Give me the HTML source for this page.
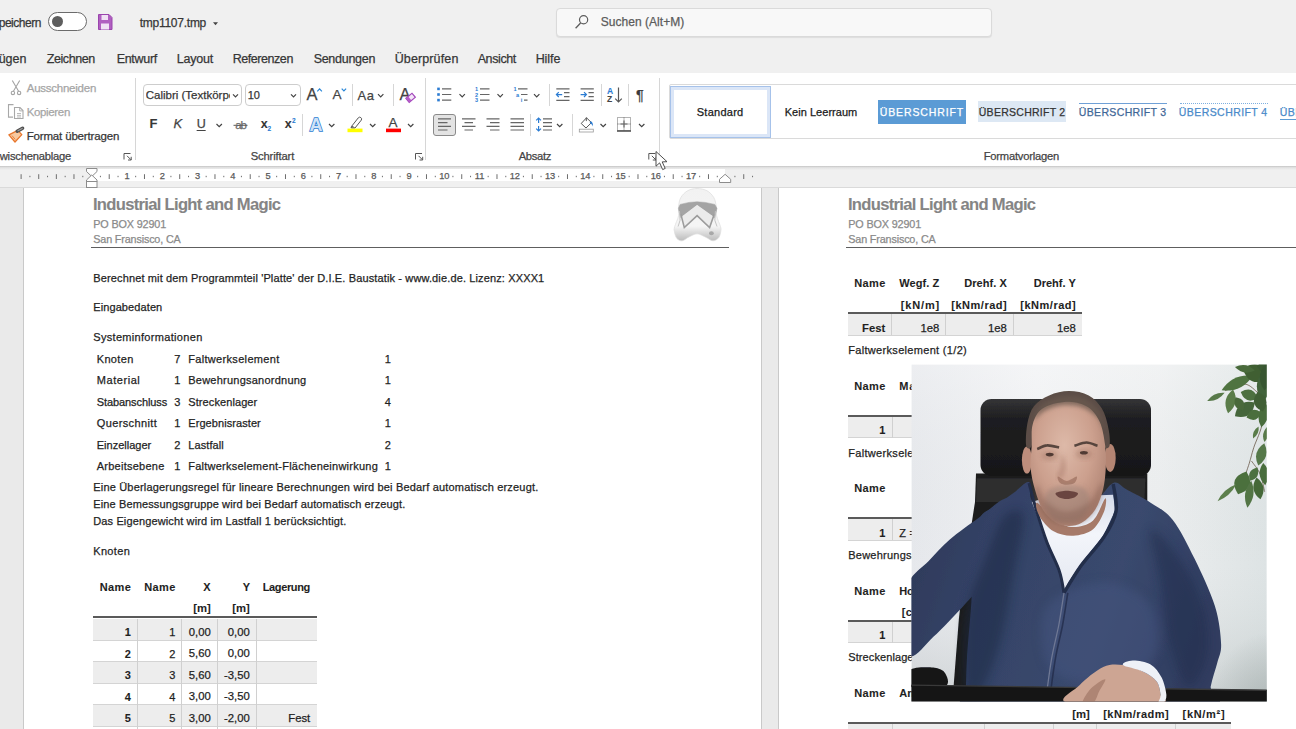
<!DOCTYPE html>
<html lang="de"><head><meta charset="utf-8"><title>tmp1107.tmp - Word</title>
<style>
html,body{margin:0;padding:0;}
body{width:1296px;height:729px;overflow:hidden;position:relative;background:#eaeaea;
  font-family:"Liberation Sans",sans-serif;color:#262626;}
.t{position:absolute;white-space:nowrap;line-height:20px;color:#262626;-webkit-text-stroke:0.25px currentColor;}
.b{position:absolute;}
svg{position:absolute;overflow:visible;}
#titlebar{left:0;top:0;width:1296px;height:73px;background:#f0f0f0;}
#ribbon{left:0;top:73px;width:1296px;height:93px;background:#ffffff;}
#rulerbg{left:0;top:166px;width:1296px;height:22px;background:#f0f0f0;border-bottom:1px solid #dadada;box-sizing:border-box;}
#ribshadow{left:0;top:166px;width:1296px;height:4px;background:linear-gradient(#c4c4c4,#e2e2e2 40%,#f0f0f0);}
#search{left:555.5px;top:7.5px;width:436px;height:29px;box-sizing:border-box;background:#f8f8f8;border:1px solid #dadada;border-radius:4px;box-shadow:0 1px 1px rgba(0,0,0,.08);}
.vsep{position:absolute;width:1px;background:#d6d6d6;}
.combo{position:absolute;box-sizing:border-box;border:1px solid #cdcdcd;border-radius:4px;background:#fff;}
#rulerwhite{left:93px;top:169px;width:632px;height:12px;background:#ffffff;}
.page{position:absolute;background:#fff;top:188px;height:560px;}
.hl{position:absolute;height:1.2px;background:#5e5e5e;}
.thick{position:absolute;height:2px;background:#5a5a5a;}
.shade{position:absolute;background:#ededed;}
.rl{position:absolute;height:1px;background:#d4d4d4;}
.cl{position:absolute;width:1px;background:#d0d0d0;}
#gallery{left:669px;top:84px;width:640px;height:55px;box-sizing:border-box;border:1px solid #dadada;border-radius:2px;background:#fff;}
#stdsel{left:670px;top:86px;width:101px;height:52px;box-sizing:border-box;border:1px solid #a6c2ea;box-shadow:inset 0 0 0 3px #dbe6f7;background:#fff;}

</style></head>
<body>
<div class="b" id="titlebar"></div>
<div class="b" id="ribbon"></div>
<div class="b" id="rulerbg"></div>
<div class="b" id="ribshadow"></div>
<div class="b" id="search"></div>
<!-- toggle -->
<div class="b" style="left:48px;top:12px;width:39px;height:19px;box-sizing:border-box;border:1px solid #6b6b6b;border-radius:10px;background:#fff;"></div>
<div class="b" style="left:52px;top:16px;width:11px;height:11px;border-radius:50%;background:#5e5e5e;"></div>
<!-- ICONS-TOP -->
<!-- ribbon separators -->
<div class="vsep" style="left:135px;top:78px;height:82px;"></div>
<div class="vsep" style="left:425px;top:78px;height:82px;"></div>
<div class="vsep" style="left:659px;top:78px;height:82px;"></div>
<div class="vsep" style="left:302px;top:114px;height:22px;"></div>
<div class="vsep" style="left:352px;top:84px;height:22px;"></div>
<div class="vsep" style="left:393px;top:84px;height:22px;"></div>
<div class="vsep" style="left:549px;top:84px;height:22px;"></div>
<div class="vsep" style="left:601px;top:84px;height:22px;"></div>
<div class="vsep" style="left:628px;top:84px;height:22px;"></div>
<div class="vsep" style="left:530px;top:114px;height:22px;"></div>
<div class="vsep" style="left:572px;top:114px;height:22px;"></div>
<div class="combo" style="left:143px;top:84px;width:99px;height:22px;"></div>
<div class="combo" style="left:245px;top:84px;width:56px;height:22px;"></div>
<div class="b" style="left:433px;top:114px;width:23px;height:22px;box-sizing:border-box;border:1px solid #8a8a8a;border-radius:3px;background:#e3e3e3;"></div>
<div class="b" id="gallery"></div>
<div class="b" id="stdsel"></div>
<div class="b" style="left:878px;top:99.5px;width:87.5px;height:24.5px;background:#5b9bd5;"></div>
<div class="b" style="left:978px;top:100.5px;width:88px;height:21.5px;background:#dde8f4;"></div>
<div class="b" style="left:1079px;top:103px;width:88px;height:1px;background:#6fa0d6;"></div>
<div class="b" style="left:1180px;top:103px;width:88px;height:0;border-top:1px dotted #7fb0e0;"></div>
<div class="b" style="left:1280px;top:119px;width:20px;height:1px;background:#5b9bd5;"></div>
<!-- ruler -->
<div class="b" id="rulerwhite"></div>
<svg width="1296" height="729" style="left:0;top:0" fill="#6e6e6e"><rect x="20.60" y="174.2" width="1" height="4.8"/><rect x="29.41" y="175.8" width="1" height="1.4"/><rect x="38.22" y="174.2" width="1" height="4.8"/><rect x="47.04" y="175.8" width="1" height="1.4"/><rect x="55.85" y="174.2" width="1" height="4.8"/><rect x="64.66" y="175.8" width="1" height="1.4"/><rect x="73.47" y="174.2" width="1" height="4.8"/><rect x="82.29" y="175.8" width="1" height="1.4"/><rect x="99.91" y="175.8" width="1" height="1.4"/><rect x="108.72" y="174.2" width="1" height="4.8"/><rect x="117.54" y="175.8" width="1" height="1.4"/><rect x="135.16" y="175.8" width="1" height="1.4"/><rect x="143.97" y="174.2" width="1" height="4.8"/><rect x="152.79" y="175.8" width="1" height="1.4"/><rect x="170.41" y="175.8" width="1" height="1.4"/><rect x="179.22" y="174.2" width="1" height="4.8"/><rect x="188.04" y="175.8" width="1" height="1.4"/><rect x="205.66" y="175.8" width="1" height="1.4"/><rect x="214.47" y="174.2" width="1" height="4.8"/><rect x="223.29" y="175.8" width="1" height="1.4"/><rect x="240.91" y="175.8" width="1" height="1.4"/><rect x="249.72" y="174.2" width="1" height="4.8"/><rect x="258.54" y="175.8" width="1" height="1.4"/><rect x="276.16" y="175.8" width="1" height="1.4"/><rect x="284.98" y="174.2" width="1" height="4.8"/><rect x="293.79" y="175.8" width="1" height="1.4"/><rect x="311.41" y="175.8" width="1" height="1.4"/><rect x="320.23" y="174.2" width="1" height="4.8"/><rect x="329.04" y="175.8" width="1" height="1.4"/><rect x="346.66" y="175.8" width="1" height="1.4"/><rect x="355.48" y="174.2" width="1" height="4.8"/><rect x="364.29" y="175.8" width="1" height="1.4"/><rect x="381.91" y="175.8" width="1" height="1.4"/><rect x="390.73" y="174.2" width="1" height="4.8"/><rect x="399.54" y="175.8" width="1" height="1.4"/><rect x="417.16" y="175.8" width="1" height="1.4"/><rect x="425.98" y="174.2" width="1" height="4.8"/><rect x="434.79" y="175.8" width="1" height="1.4"/><rect x="452.41" y="175.8" width="1" height="1.4"/><rect x="461.23" y="174.2" width="1" height="4.8"/><rect x="470.04" y="175.8" width="1" height="1.4"/><rect x="487.66" y="175.8" width="1" height="1.4"/><rect x="496.48" y="174.2" width="1" height="4.8"/><rect x="505.29" y="175.8" width="1" height="1.4"/><rect x="522.91" y="175.8" width="1" height="1.4"/><rect x="531.73" y="174.2" width="1" height="4.8"/><rect x="540.54" y="175.8" width="1" height="1.4"/><rect x="558.16" y="175.8" width="1" height="1.4"/><rect x="566.98" y="174.2" width="1" height="4.8"/><rect x="575.79" y="175.8" width="1" height="1.4"/><rect x="593.41" y="175.8" width="1" height="1.4"/><rect x="602.23" y="174.2" width="1" height="4.8"/><rect x="611.04" y="175.8" width="1" height="1.4"/><rect x="628.66" y="175.8" width="1" height="1.4"/><rect x="637.48" y="174.2" width="1" height="4.8"/><rect x="646.29" y="175.8" width="1" height="1.4"/><rect x="663.91" y="175.8" width="1" height="1.4"/><rect x="672.73" y="174.2" width="1" height="4.8"/><rect x="681.54" y="175.8" width="1" height="1.4"/><rect x="699.16" y="175.8" width="1" height="1.4"/><rect x="707.98" y="174.2" width="1" height="4.8"/><rect x="716.79" y="175.8" width="1" height="1.4"/><rect x="734.41" y="175.8" width="1" height="1.4"/><rect x="743.23" y="174.2" width="1" height="4.8"/><rect x="752.04" y="175.8" width="1" height="1.4"/></svg>
<svg width="1296" height="729" style="left:0;top:0" viewBox="0 0 1296 729" fill="#fff" stroke="#8c8c8c" stroke-width="1">
<path d="M86.5 168.5h10.5v3l-5.25 5l-5.25 -5z"/>
<path d="M86.5 181.5v-1.5l5.25 -5l5.25 5v1.5z"/>
<rect x="86.5" y="181.5" width="10.5" height="6"/>
<path d="M719.5 182.5v-3.2l5.6 -5l5.6 5v3.2z"/>
</svg>

<!-- pages -->
<div class="page" style="left:23px;width:739px;border-left:1px solid #c9c9c9;border-right:1px solid #c9c9c9;box-sizing:border-box;"></div>
<div class="page" style="left:778px;width:540px;border-left:1px solid #c9c9c9;box-sizing:border-box;"></div>
<div class="hl" style="left:91.3px;top:246.6px;width:637.7px;"></div>
<div class="hl" style="left:846.3px;top:246.6px;width:460px;"></div>
<svg width="1296" height="729" style="left:0;top:0" viewBox="0 0 1296 729">
<defs><filter id="hb" x="-10%" y="-10%" width="120%" height="120%"><feGaussianBlur stdDeviation="0.45"/></filter><linearGradient id="hg" x1="0" y1="0" x2="0" y2="1"><stop offset="0" stop-color="#f2f2f2"/><stop offset="0.72" stop-color="#f5f5f5"/><stop offset="1" stop-color="#bcbcbc"/></linearGradient></defs>
<g filter="url(#hb)">
<path d="M697.1 188.5 C700.3 188.5 704.3 189.3 707.1 190.8 C709.8 192.3 712.3 194.9 713.8 197.6 C715.4 200.2 715.8 203.6 716.3 206.6 C716.7 209.6 715.9 212.4 716.6 215.7 C717.3 219.0 719.7 224.0 720.5 226.5 C721.2 229.1 721.1 229.2 720.8 231.1 C720.5 232.9 720.1 235.9 718.8 237.6 C717.5 239.2 715.2 240.9 712.9 240.8 C710.7 240.7 707.9 238.1 705.2 236.9 C702.6 235.8 699.8 233.8 697.1 233.8 C694.4 233.8 691.4 235.8 689.0 236.9 C686.5 238.1 684.2 240.6 682.2 240.8 C680.1 241.1 678.1 239.9 676.7 238.3 C675.4 236.7 674.6 233.0 674.3 231.1 C674.0 229.1 674.0 229.1 674.7 226.5 C675.4 224.0 677.9 219.0 678.6 215.7 C679.2 212.4 678.2 209.6 678.6 206.6 C678.9 203.6 679.3 200.2 680.8 197.6 C682.3 194.9 684.9 192.3 687.6 190.8 C690.3 189.3 693.9 188.5 697.1 188.5Z" fill="url(#hg)" stroke="#dcdcdc" stroke-width="0.7"/>
<path d="M678.4 208.3 L680.1 204.4 L689.0 202.4 L697.1 201.8 L705.2 202.4 L714.8 204.4 L717.0 208.3 L715.7 213.9 L714.3 218.0 L712.9 216.2 L697.1 205.0 L682.3 216.2 L681.0 218.0 L679.5 213.9Z" fill="#a4a4a4" stroke="#a4a4a4" stroke-width="0.5" stroke-linejoin="round"/>
<path d="M682.3 216.2 L684.4 227.3 L697.1 215.7 L709.3 227.3 L712.9 216.2 L697.1 205.0Z" fill="#ebebeb"/>
<path d="M680.8 213.9 L684.3 227.6 L697.1 215.7 L709.6 227.6 L714.3 213.9" fill="none" stroke="#9c9c9c" stroke-width="1.6" stroke-linejoin="miter"/>
<path d="M679.5 211.1 L680.1 220.2 L678.1 226.5" fill="none" stroke="#c4c4c4" stroke-width="1"/>
<path d="M715.4 211.1 L714.8 220.2 L717.0 226.5" fill="none" stroke="#c4c4c4" stroke-width="1"/>
<ellipse cx="711.4" cy="233.3" rx="2.4" ry="2" fill="#a8a8a8"/>
</g></svg>
<div class="shade" style="left:93px;top:618.8px;width:224px;height:21.5px;"></div>
<div class="shade" style="left:93px;top:661.7px;width:224px;height:21.5px;"></div>
<div class="shade" style="left:93px;top:704.7px;width:224px;height:21.5px;"></div>
<div class="rl" style="left:93px;top:639.8px;width:224px;"></div>
<div class="rl" style="left:93px;top:661.2px;width:224px;"></div>
<div class="rl" style="left:93px;top:682.7px;width:224px;"></div>
<div class="rl" style="left:93px;top:704.2px;width:224px;"></div>
<div class="rl" style="left:93px;top:725.6px;width:224px;"></div>
<div class="cl" style="left:136.5px;top:618.8px;height:120px;"></div>
<div class="cl" style="left:181px;top:618.8px;height:120px;"></div>
<div class="cl" style="left:216.5px;top:618.8px;height:120px;"></div>
<div class="cl" style="left:255.5px;top:618.8px;height:120px;"></div>
<div class="thick" style="left:93px;top:616.3px;width:224px;"></div>
<div class="shade" style="left:848px;top:314px;width:234px;height:21px;"></div>
<div class="rl" style="left:848px;top:335px;width:234px;"></div>
<div class="cl" style="left:891px;top:314px;height:21px;"></div>
<div class="cl" style="left:944.5px;top:314px;height:21px;"></div>
<div class="cl" style="left:1012.5px;top:314px;height:21px;"></div>
<div class="thick" style="left:848px;top:312.2px;width:234px;"></div>
<div class="shade" style="left:848px;top:416.5px;width:300px;height:21px;"></div>
<div class="rl" style="left:848px;top:437.2px;width:300px;"></div>
<div class="cl" style="left:891.5px;top:416.5px;height:21px;"></div>
<div class="thick" style="left:848px;top:414.7px;width:300px;"></div>
<div class="shade" style="left:848px;top:519px;width:300px;height:21px;"></div>
<div class="rl" style="left:848px;top:539.8px;width:300px;"></div>
<div class="cl" style="left:891.5px;top:519px;height:21px;"></div>
<div class="thick" style="left:848px;top:517.2px;width:300px;"></div>
<div class="shade" style="left:848px;top:621.5px;width:300px;height:21px;"></div>
<div class="rl" style="left:848px;top:642.2px;width:300px;"></div>
<div class="cl" style="left:891.5px;top:621.5px;height:21px;"></div>
<div class="thick" style="left:848px;top:619.7px;width:300px;"></div>
<div class="shade" style="left:848px;top:724px;width:383px;height:10px;"></div>
<div class="cl" style="left:891.5px;top:724px;height:10px;"></div>
<div class="cl" style="left:983.8px;top:724px;height:10px;"></div>
<div class="cl" style="left:1052.7px;top:724px;height:10px;"></div>
<div class="cl" style="left:1096.4px;top:724px;height:10px;"></div>
<div class="cl" style="left:1174.8px;top:724px;height:10px;"></div>
<div class="thick" style="left:848px;top:722.2px;width:383px;"></div>
<span class="t" id="t0" style="top:12.59px;font-size:12px;color:#363636;letter-spacing:-0.484px;left:-1.32px;">peichern</span>
<span class="t" id="t1" style="top:12.59px;font-size:12px;color:#363636;letter-spacing:-0.252px;left:139.68px;">tmp1107.tmp</span>
<span class="t" id="t2" style="top:12.34px;font-size:12px;color:#5c5c5c;letter-spacing:0.046px;left:600.68px;">Suchen (Alt+M)</span>
<span class="t" id="t3" style="top:48.92px;font-size:12.5px;color:#363636;letter-spacing:-0.038px;left:-1.35px;">ügen</span>
<span class="t" id="t4" style="top:48.92px;font-size:12.5px;color:#363636;letter-spacing:-0.391px;left:46.65px;">Zeichnen</span>
<span class="t" id="t5" style="top:48.92px;font-size:12.5px;color:#363636;letter-spacing:-0.282px;left:116.65px;">Entwurf</span>
<span class="t" id="t6" style="top:48.92px;font-size:12.5px;color:#363636;letter-spacing:-0.166px;left:176.65px;">Layout</span>
<span class="t" id="t7" style="top:48.92px;font-size:12.5px;color:#363636;letter-spacing:-0.436px;left:232.65px;">Referenzen</span>
<span class="t" id="t8" style="top:48.92px;font-size:12.5px;color:#363636;letter-spacing:-0.282px;left:313.65px;">Sendungen</span>
<span class="t" id="t9" style="top:48.92px;font-size:12.5px;color:#363636;letter-spacing:0.128px;left:394.65px;">Überprüfen</span>
<span class="t" id="t10" style="top:48.92px;font-size:12.5px;color:#363636;letter-spacing:-0.383px;left:477.65px;">Ansicht</span>
<span class="t" id="t11" style="top:48.92px;font-size:12.5px;color:#363636;letter-spacing:-0.079px;left:535.65px;">Hilfe</span>
<span class="t" id="t12" style="top:78.02px;font-size:11.5px;color:#a6a6a6;letter-spacing:-0.243px;left:26.71px;">Ausschneiden</span>
<span class="t" id="t13" style="top:102.02px;font-size:11.5px;color:#a6a6a6;letter-spacing:-0.352px;left:26.71px;">Kopieren</span>
<span class="t" id="t14" style="top:126.02px;font-size:11.5px;color:#363636;letter-spacing:-0.167px;left:26.71px;">Format übertragen</span>
<span class="t" id="t15" style="top:146.12px;font-size:11.2px;color:#444;letter-spacing:-0.206px;left:-0.27px;">wischenablage</span>
<span class="t" id="t16" style="top:146.12px;font-size:11.2px;color:#444;letter-spacing:-0.136px;left:250.73px;">Schriftart</span>
<span class="t" id="t17" style="top:146.12px;font-size:11.2px;color:#444;letter-spacing:-0.332px;left:518.73px;">Absatz</span>
<span class="t" id="t18" style="top:146.12px;font-size:11.2px;color:#444;letter-spacing:-0.217px;left:983.73px;">Formatvorlagen</span>
<span class="t" id="t19" style="top:85.02px;font-size:11.5px;color:#363636;left:145.71px;width:84.5px;overflow:hidden;">Calibri (Textkörper)</span>
<span class="t" id="t20" style="top:85.19px;font-size:11px;color:#363636;left:247.74px;">10</span>
<span class="t" id="t21" style="top:113.50px;font-size:13px;font-weight:700;-webkit-text-stroke-width:0.08px;color:#363636;left:149.62px;">F</span>
<span class="t" id="t22" style="top:113.50px;font-size:13px;color:#444;font-style:italic;left:173.62px;">K</span>
<span class="t" id="t23" style="top:113.67px;font-size:12.5px;color:#444;left:196.65px;text-decoration:underline;text-underline-offset:2px;">U</span>
<span class="t" id="t24" style="top:114.52px;font-size:11.5px;color:#6a6a6a;letter-spacing:-1.200px;left:235.21px;">ab</span>
<span class="t" id="t25" style="top:114.17px;font-size:12.5px;font-weight:700;-webkit-text-stroke-width:0.08px;color:#363636;left:260.65px;">x</span>
<span class="t" id="t26" style="top:119.25px;font-size:6.5px;font-weight:700;-webkit-text-stroke-width:0.08px;color:#2b7cd3;left:267.51px;">2</span>
<span class="t" id="t27" style="top:114.17px;font-size:12.5px;font-weight:700;-webkit-text-stroke-width:0.08px;color:#363636;left:284.65px;">x</span>
<span class="t" id="t28" style="top:110.75px;font-size:6.5px;font-weight:700;-webkit-text-stroke-width:0.08px;color:#2b7cd3;left:292.01px;">2</span>
<span class="t" id="t29" style="top:84.28px;font-size:16.5px;color:#444;left:306.41px;">A</span>
<span class="t" id="t30" style="top:85.32px;font-size:13.5px;color:#444;left:332.59px;">A</span>
<span class="t" id="t31" style="top:85.50px;font-size:13px;color:#444;letter-spacing:-0.146px;left:357.62px;letter-spacing:0.5px;">Aa</span>
<span class="t" id="t32" style="top:84.08px;font-size:16.5px;color:#444;left:399.41px;">A</span>
<span class="t" id="t33" style="top:112.92px;font-size:13.5px;color:#444;left:388.59px;">A</span>
<span class="t" id="t34" style="top:80.55px;font-size:8.5px;font-weight:700;-webkit-text-stroke-width:0.08px;color:#2b7cd3;left:606.89px;">A</span>
<span class="t" id="t35" style="top:89.05px;font-size:8.5px;font-weight:700;-webkit-text-stroke-width:0.08px;color:#444;left:606.89px;">Z</span>
<span class="t" id="t36" style="top:85.28px;font-size:14.5px;color:#3a3a3a;left:636.03px;">¶</span>
<span class="t" id="t37" style="top:101.69px;font-size:11px;color:#1a1a1a;letter-spacing:0.266px;left:696.74px;">Standard</span>
<span class="t" id="t38" style="top:101.69px;font-size:11px;color:#1a1a1a;letter-spacing:0.030px;left:784.74px;">Kein Leerraum</span>
<span class="t" id="t39" style="top:102.11px;font-size:10.5px;color:#ffffff;letter-spacing:0.879px;left:879.77px;">ÜBERSCHRIFT</span>
<span class="t" id="t40" style="top:102.11px;font-size:10.5px;color:#333;letter-spacing:0.267px;left:978.77px;">ÜBERSCHRIFT 2</span>
<span class="t" id="t41" style="top:102.11px;font-size:10.5px;color:#3f6797;letter-spacing:0.351px;left:1078.77px;">ÜBERSCHRIFT 3</span>
<span class="t" id="t42" style="top:102.11px;font-size:10.5px;color:#4a8ac9;letter-spacing:0.434px;left:1178.77px;">ÜBERSCHRIFT 4</span>
<span class="t" id="t43" style="top:102.11px;font-size:10.5px;color:#4a8ac9;letter-spacing:0.434px;left:1279.77px;">ÜBERSCHRIFT 5</span>
<span class="t" id="t44" style="top:165.68px;font-size:9.3px;color:#5a5a5a;left:124.46px;">1</span>
<span class="t" id="t45" style="top:165.68px;font-size:9.3px;color:#5a5a5a;left:159.71px;">2</span>
<span class="t" id="t46" style="top:165.68px;font-size:9.3px;color:#5a5a5a;left:194.96px;">3</span>
<span class="t" id="t47" style="top:165.68px;font-size:9.3px;color:#5a5a5a;left:230.21px;">4</span>
<span class="t" id="t48" style="top:165.68px;font-size:9.3px;color:#5a5a5a;left:265.46px;">5</span>
<span class="t" id="t49" style="top:165.68px;font-size:9.3px;color:#5a5a5a;left:300.71px;">6</span>
<span class="t" id="t50" style="top:165.68px;font-size:9.3px;color:#5a5a5a;left:335.96px;">7</span>
<span class="t" id="t51" style="top:165.68px;font-size:9.3px;color:#5a5a5a;left:371.21px;">8</span>
<span class="t" id="t52" style="top:165.68px;font-size:9.3px;color:#5a5a5a;left:406.46px;">9</span>
<span class="t" id="t53" style="top:165.68px;font-size:9.3px;color:#5a5a5a;left:439.13px;">10</span>
<span class="t" id="t54" style="top:165.68px;font-size:9.3px;color:#5a5a5a;left:474.72px;">11</span>
<span class="t" id="t55" style="top:165.68px;font-size:9.3px;color:#5a5a5a;left:509.63px;">12</span>
<span class="t" id="t56" style="top:165.68px;font-size:9.3px;color:#5a5a5a;left:544.88px;">13</span>
<span class="t" id="t57" style="top:165.68px;font-size:9.3px;color:#5a5a5a;left:580.13px;">14</span>
<span class="t" id="t58" style="top:165.68px;font-size:9.3px;color:#5a5a5a;left:615.38px;">15</span>
<span class="t" id="t59" style="top:165.68px;font-size:9.3px;color:#5a5a5a;left:650.63px;">16</span>
<span class="t" id="t60" style="top:165.68px;font-size:9.3px;color:#5a5a5a;left:685.88px;">17</span>
<span class="t" id="t61" style="top:195.35px;font-size:16.6px;font-weight:700;-webkit-text-stroke-width:0.08px;color:#858585;letter-spacing:-0.696px;left:92.90px;">Industrial Light and Magic</span>
<span class="t" id="t62" style="top:213.76px;font-size:10.8px;color:#8a8a8a;letter-spacing:-0.131px;left:93.25px;">PO BOX 92901</span>
<span class="t" id="t63" style="top:229.26px;font-size:10.8px;color:#8a8a8a;letter-spacing:-0.157px;left:93.25px;">San Fransisco, CA</span>
<span class="t" id="t64" style="top:267.69px;font-size:11px;color:#1f1f1f;letter-spacing:0.132px;left:93.24px;">Berechnet mit dem Programmteil &#x27;Platte&#x27; der D.I.E. Baustatik - www.die.de. Lizenz: XXXX1</span>
<span class="t" id="t65" style="top:297.19px;font-size:11px;color:#1f1f1f;letter-spacing:0.101px;left:93.24px;">Eingabedaten</span>
<span class="t" id="t66" style="top:326.69px;font-size:11px;color:#1f1f1f;letter-spacing:0.316px;left:93.24px;">Systeminformationen</span>
<span class="t" id="t67" style="top:348.69px;font-size:11px;color:#1f1f1f;letter-spacing:0.329px;left:96.74px;">Knoten</span>
<span class="t" id="t68" style="top:348.69px;font-size:11px;color:#1f1f1f;left:174.13px;">7</span>
<span class="t" id="t69" style="top:348.69px;font-size:11px;color:#1f1f1f;letter-spacing:0.321px;left:188.24px;">Faltwerkselement</span>
<span class="t" id="t70" style="top:348.69px;font-size:11px;color:#1f1f1f;left:384.63px;">1</span>
<span class="t" id="t71" style="top:370.19px;font-size:11px;color:#1f1f1f;letter-spacing:0.556px;left:96.74px;">Material</span>
<span class="t" id="t72" style="top:370.19px;font-size:11px;color:#1f1f1f;left:174.13px;">1</span>
<span class="t" id="t73" style="top:370.19px;font-size:11px;color:#1f1f1f;letter-spacing:0.236px;left:188.24px;">Bewehrungsanordnung</span>
<span class="t" id="t74" style="top:370.19px;font-size:11px;color:#1f1f1f;left:384.63px;">1</span>
<span class="t" id="t75" style="top:391.69px;font-size:11px;color:#1f1f1f;letter-spacing:-0.086px;left:96.74px;">Stabanschluss</span>
<span class="t" id="t76" style="top:391.69px;font-size:11px;color:#1f1f1f;left:174.13px;">3</span>
<span class="t" id="t77" style="top:391.69px;font-size:11px;color:#1f1f1f;letter-spacing:0.095px;left:188.24px;">Streckenlager</span>
<span class="t" id="t78" style="top:391.69px;font-size:11px;color:#1f1f1f;left:384.63px;">4</span>
<span class="t" id="t79" style="top:413.19px;font-size:11px;color:#1f1f1f;letter-spacing:0.377px;left:96.74px;">Querschnitt</span>
<span class="t" id="t80" style="top:413.19px;font-size:11px;color:#1f1f1f;left:174.13px;">1</span>
<span class="t" id="t81" style="top:413.19px;font-size:11px;color:#1f1f1f;letter-spacing:0.075px;left:188.24px;">Ergebnisraster</span>
<span class="t" id="t82" style="top:413.19px;font-size:11px;color:#1f1f1f;left:384.63px;">1</span>
<span class="t" id="t83" style="top:434.69px;font-size:11px;color:#1f1f1f;letter-spacing:0.010px;left:96.74px;">Einzellager</span>
<span class="t" id="t84" style="top:434.69px;font-size:11px;color:#1f1f1f;left:174.13px;">2</span>
<span class="t" id="t85" style="top:434.69px;font-size:11px;color:#1f1f1f;letter-spacing:0.094px;left:188.24px;">Lastfall</span>
<span class="t" id="t86" style="top:434.69px;font-size:11px;color:#1f1f1f;left:384.63px;">2</span>
<span class="t" id="t87" style="top:456.19px;font-size:11px;color:#1f1f1f;letter-spacing:0.245px;left:96.74px;">Arbeitsebene</span>
<span class="t" id="t88" style="top:456.19px;font-size:11px;color:#1f1f1f;left:174.13px;">1</span>
<span class="t" id="t89" style="top:456.19px;font-size:11px;color:#1f1f1f;letter-spacing:0.241px;left:188.24px;">Faltwerkselement-Flächeneinwirkung</span>
<span class="t" id="t90" style="top:456.19px;font-size:11px;color:#1f1f1f;left:384.63px;">1</span>
<span class="t" id="t91" style="top:477.44px;font-size:11px;color:#1f1f1f;letter-spacing:0.180px;left:93.24px;">Eine Überlagerungsregel für lineare Berechnungen wird bei Bedarf automatisch erzeugt.</span>
<span class="t" id="t92" style="top:493.69px;font-size:11px;color:#1f1f1f;letter-spacing:0.132px;left:93.24px;">Eine Bemessungsgruppe wird bei Bedarf automatisch erzeugt.</span>
<span class="t" id="t93" style="top:510.69px;font-size:11px;color:#1f1f1f;letter-spacing:0.133px;left:93.24px;">Das Eigengewicht wird im Lastfall 1 berücksichtigt.</span>
<span class="t" id="t94" style="top:541.19px;font-size:11px;color:#1f1f1f;letter-spacing:0.329px;left:93.24px;">Knoten</span>
<span class="t" id="t95" style="top:576.99px;font-size:11px;font-weight:700;-webkit-text-stroke-width:0.08px;color:#1f1f1f;letter-spacing:0.350px;left:99.74px;">Name</span>
<span class="t" id="t96" style="top:576.99px;font-size:11px;font-weight:700;-webkit-text-stroke-width:0.08px;color:#1f1f1f;letter-spacing:0.350px;left:144.24px;">Name</span>
<span class="t" id="t97" style="top:576.99px;font-size:11px;font-weight:700;-webkit-text-stroke-width:0.08px;color:#1f1f1f;left:203.24px;">X</span>
<span class="t" id="t98" style="top:576.99px;font-size:11px;font-weight:700;-webkit-text-stroke-width:0.08px;color:#1f1f1f;left:242.74px;">Y</span>
<span class="t" id="t99" style="top:576.99px;font-size:11px;font-weight:700;-webkit-text-stroke-width:0.08px;color:#1f1f1f;letter-spacing:-0.372px;left:262.74px;">Lagerung</span>
<span class="t" id="t100" style="top:598.38px;font-size:11.3px;font-weight:700;-webkit-text-stroke-width:0.08px;color:#1f1f1f;left:193.20px;">[m]</span>
<span class="t" id="t101" style="top:598.38px;font-size:11.3px;font-weight:700;-webkit-text-stroke-width:0.08px;color:#1f1f1f;left:232.20px;">[m]</span>
<span class="t" id="t102" style="top:622.09px;font-size:11px;font-weight:700;-webkit-text-stroke-width:0.08px;color:#1f1f1f;left:124.63px;">1</span>
<span class="t" id="t103" style="top:622.09px;font-size:11px;color:#1f1f1f;left:169.13px;">1</span>
<span class="t" id="t104" style="top:621.98px;font-size:11.3px;color:#1f1f1f;left:188.78px;">0,00</span>
<span class="t" id="t105" style="top:621.98px;font-size:11.3px;color:#1f1f1f;left:227.78px;">0,00</span>
<span class="t" id="t106" style="top:643.56px;font-size:11px;font-weight:700;-webkit-text-stroke-width:0.08px;color:#1f1f1f;left:124.63px;">2</span>
<span class="t" id="t107" style="top:643.56px;font-size:11px;color:#1f1f1f;left:169.13px;">2</span>
<span class="t" id="t108" style="top:643.45px;font-size:11.3px;color:#1f1f1f;left:188.78px;">5,60</span>
<span class="t" id="t109" style="top:643.45px;font-size:11.3px;color:#1f1f1f;left:227.78px;">0,00</span>
<span class="t" id="t110" style="top:665.03px;font-size:11px;font-weight:700;-webkit-text-stroke-width:0.08px;color:#1f1f1f;left:124.63px;">3</span>
<span class="t" id="t111" style="top:665.03px;font-size:11px;color:#1f1f1f;left:169.13px;">3</span>
<span class="t" id="t112" style="top:664.92px;font-size:11.3px;color:#1f1f1f;left:188.78px;">5,60</span>
<span class="t" id="t113" style="top:664.92px;font-size:11.3px;color:#1f1f1f;left:224.03px;">-3,50</span>
<span class="t" id="t114" style="top:686.50px;font-size:11px;font-weight:700;-webkit-text-stroke-width:0.08px;color:#1f1f1f;left:124.63px;">4</span>
<span class="t" id="t115" style="top:686.50px;font-size:11px;color:#1f1f1f;left:169.13px;">4</span>
<span class="t" id="t116" style="top:686.39px;font-size:11.3px;color:#1f1f1f;left:188.78px;">3,00</span>
<span class="t" id="t117" style="top:686.39px;font-size:11.3px;color:#1f1f1f;left:224.03px;">-3,50</span>
<span class="t" id="t118" style="top:707.97px;font-size:11px;font-weight:700;-webkit-text-stroke-width:0.08px;color:#1f1f1f;left:124.63px;">5</span>
<span class="t" id="t119" style="top:707.97px;font-size:11px;color:#1f1f1f;left:169.13px;">5</span>
<span class="t" id="t120" style="top:707.86px;font-size:11.3px;color:#1f1f1f;left:188.78px;">3,00</span>
<span class="t" id="t121" style="top:707.86px;font-size:11.3px;color:#1f1f1f;left:224.03px;">-2,00</span>
<span class="t" id="t122" style="top:707.86px;font-size:11.3px;color:#1f1f1f;left:288.29px;">Fest</span>
<span class="t" id="t123" style="top:195.35px;font-size:16.6px;font-weight:700;-webkit-text-stroke-width:0.08px;color:#858585;letter-spacing:-0.696px;left:847.90px;">Industrial Light and Magic</span>
<span class="t" id="t124" style="top:213.76px;font-size:10.8px;color:#8a8a8a;letter-spacing:-0.131px;left:848.25px;">PO BOX 92901</span>
<span class="t" id="t125" style="top:229.26px;font-size:10.8px;color:#8a8a8a;letter-spacing:-0.157px;left:848.25px;">San Fransisco, CA</span>
<span class="t" id="t126" style="top:273.19px;font-size:11px;font-weight:700;-webkit-text-stroke-width:0.08px;color:#1f1f1f;letter-spacing:0.350px;left:854.24px;">Name</span>
<span class="t" id="t127" style="top:273.19px;font-size:11px;font-weight:700;-webkit-text-stroke-width:0.08px;color:#1f1f1f;letter-spacing:0.084px;left:899.24px;">Wegf. Z</span>
<span class="t" id="t128" style="top:273.19px;font-size:11px;font-weight:700;-webkit-text-stroke-width:0.08px;color:#1f1f1f;letter-spacing:0.048px;left:964.24px;">Drehf. X</span>
<span class="t" id="t129" style="top:273.19px;font-size:11px;font-weight:700;-webkit-text-stroke-width:0.08px;color:#1f1f1f;letter-spacing:0.005px;left:1033.74px;">Drehf. Y</span>
<span class="t" id="t130" style="top:294.94px;font-size:11px;font-weight:700;-webkit-text-stroke-width:0.08px;color:#1f1f1f;letter-spacing:0.857px;left:900.74px;">[kN/m]</span>
<span class="t" id="t131" style="top:294.94px;font-size:11px;font-weight:700;-webkit-text-stroke-width:0.08px;color:#1f1f1f;letter-spacing:0.522px;left:951.24px;">[kNm/rad]</span>
<span class="t" id="t132" style="top:294.94px;font-size:11px;font-weight:700;-webkit-text-stroke-width:0.08px;color:#1f1f1f;letter-spacing:0.522px;left:1020.24px;">[kNm/rad]</span>
<span class="t" id="t133" style="top:318.08px;font-size:11.3px;font-weight:700;-webkit-text-stroke-width:0.08px;color:#1f1f1f;left:862.04px;">Fest</span>
<span class="t" id="t134" style="top:318.08px;font-size:11.3px;color:#1f1f1f;left:920.42px;">1e8</span>
<span class="t" id="t135" style="top:318.08px;font-size:11.3px;color:#1f1f1f;left:987.92px;">1e8</span>
<span class="t" id="t136" style="top:318.08px;font-size:11.3px;color:#1f1f1f;left:1056.92px;">1e8</span>
<span class="t" id="t137" style="top:339.94px;font-size:11px;color:#1f1f1f;letter-spacing:0.316px;left:848.24px;">Faltwerkselement (1/2)</span>
<span class="t" id="t138" style="top:375.59px;font-size:11px;font-weight:700;-webkit-text-stroke-width:0.08px;color:#1f1f1f;letter-spacing:0.350px;left:854.24px;">Name</span>
<span class="t" id="t139" style="top:375.59px;font-size:11px;font-weight:700;-webkit-text-stroke-width:0.08px;color:#1f1f1f;letter-spacing:0.777px;left:899.24px;">Material</span>
<span class="t" id="t140" style="top:420.49px;font-size:11px;font-weight:700;-webkit-text-stroke-width:0.08px;color:#1f1f1f;left:879.13px;">1</span>
<span class="t" id="t141" style="top:442.89px;font-size:11px;color:#1f1f1f;letter-spacing:0.316px;left:848.24px;">Faltwerkselement (2/2)</span>
<span class="t" id="t142" style="top:478.09px;font-size:11px;font-weight:700;-webkit-text-stroke-width:0.08px;color:#1f1f1f;letter-spacing:0.350px;left:854.24px;">Name</span>
<span class="t" id="t143" style="top:522.99px;font-size:11px;font-weight:700;-webkit-text-stroke-width:0.08px;color:#1f1f1f;left:879.13px;">1</span>
<span class="t" id="t144" style="top:522.99px;font-size:11px;color:#1f1f1f;letter-spacing:0.193px;left:899.24px;">Z = 0,00</span>
<span class="t" id="t145" style="top:544.79px;font-size:11px;color:#1f1f1f;letter-spacing:0.236px;left:848.24px;">Bewehrungsanordnung</span>
<span class="t" id="t146" style="top:580.59px;font-size:11px;font-weight:700;-webkit-text-stroke-width:0.08px;color:#1f1f1f;letter-spacing:0.350px;left:854.24px;">Name</span>
<span class="t" id="t147" style="top:580.59px;font-size:11px;font-weight:700;-webkit-text-stroke-width:0.08px;color:#1f1f1f;letter-spacing:-0.174px;left:899.24px;">Hochbau</span>
<span class="t" id="t148" style="top:602.19px;font-size:11px;font-weight:700;-webkit-text-stroke-width:0.08px;color:#1f1f1f;letter-spacing:0.429px;left:901.74px;">[cm]</span>
<span class="t" id="t149" style="top:625.19px;font-size:11px;font-weight:700;-webkit-text-stroke-width:0.08px;color:#1f1f1f;left:879.13px;">1</span>
<span class="t" id="t150" style="top:647.49px;font-size:11px;color:#1f1f1f;letter-spacing:0.095px;left:848.24px;">Streckenlager</span>
<span class="t" id="t151" style="top:682.59px;font-size:11px;font-weight:700;-webkit-text-stroke-width:0.08px;color:#1f1f1f;letter-spacing:0.350px;left:854.24px;">Name</span>
<span class="t" id="t152" style="top:682.59px;font-size:11px;font-weight:700;-webkit-text-stroke-width:0.08px;color:#1f1f1f;letter-spacing:0.026px;left:899.24px;">Anfang</span>
<span class="t" id="t153" style="top:704.38px;font-size:11.3px;font-weight:700;-webkit-text-stroke-width:0.08px;color:#1f1f1f;left:1072.30px;">[m]</span>
<span class="t" id="t154" style="top:704.49px;font-size:11px;font-weight:700;-webkit-text-stroke-width:0.08px;color:#1f1f1f;letter-spacing:0.477px;left:1103.24px;">[kNm/radm]</span>
<span class="t" id="t155" style="top:704.49px;font-size:11px;font-weight:700;-webkit-text-stroke-width:0.08px;color:#1f1f1f;letter-spacing:0.688px;left:1182.54px;">[kN/m²]</span>
<svg width="1296" height="729" style="left:0;top:0" fill="none" stroke-linecap="butt">
<!-- save icon -->
<g>
<path d="M98.5 14.5h10.5l3 3v12h-13.5z" fill="#b05fc0" stroke="#9a44ad" stroke-width="1"/>
<rect x="101.5" y="15" width="6.5" height="5" fill="#f0e1f4"/>
<rect x="101" y="23.5" width="8" height="6" fill="#f0e1f4"/>
</g>
<!-- title caret -->
<path d="M213 22.2h5l-2.5 3z" fill="#444"/>
<!-- search magnifier -->
<circle cx="583.6" cy="19.8" r="4.1" stroke="#5c5c5c" stroke-width="1.2"/>
<path d="M580.6 23 L575.6 28.2" stroke="#5c5c5c" stroke-width="1.3"/>
<!-- scissors -->
<g stroke="#a3a3a3" stroke-width="1.1">
<path d="M12.3 80.5 L18.6 91.2 M19.7 80.5 L13.4 91.2"/>
<circle cx="12.9" cy="92.9" r="1.7"/><circle cx="19.1" cy="92.9" r="1.7"/>
</g>
<!-- copy -->
<g stroke="#a8a8a8" stroke-width="1.1">
<path d="M13.5 104.6h-5v12.5h4.5"/>
<path d="M14.5 107.5h5.5l3 3v8h-8.5z" fill="#fff"/>
<path d="M19.7 107.7v3.2h3.2" stroke-width="0.9"/>
<path d="M17 113.5h4M17 115.3h4M17 117h4" stroke-width="0.8"/>
</g>
<!-- format painter -->
<g>
<path d="M8.9 134.8 L17.8 130.4 L21.8 134.6 L15 142 Z" fill="#f8c9a0" stroke="#e8762c" stroke-width="1.3" stroke-linejoin="round"/>
<path d="M12 135.6 L15.2 139.4" stroke="#e8762c" stroke-width="0.9"/>
<path d="M17.2 131.2 L22.6 128.2" stroke="#4f4f4f" stroke-width="3.4" stroke-linecap="round"/>
<path d="M18 130.8 L22.2 128.5" stroke="#a0a0a0" stroke-width="1.2" stroke-linecap="round"/>
</g>
<!-- launchers -->
<g stroke="#555" stroke-width="1">
<path d="M124 159.5v-6h6.5"/><path d="M127 155.8l4 4M131.2 156.8v3.2h-3.2" />
<path d="M415.5 159.5v-6h6.5"/><path d="M418.5 155.8l4 4M422.7 156.8v3.2h-3.2" />
<path d="M648.8 159.5v-6h6.5"/><path d="M651.8 155.8l4 4M656 156.8v3.2h-3.2" />
</g>
<path d="M233.5 125.3h14" stroke="#5a5a5a" stroke-width="1"/>
<!-- combo chevrons -->
<g stroke="#444" stroke-width="1.2">
<path d="M233 94.3l2.5 2.5l2.5-2.5"/>
<path d="M291 94.3l2.5 2.5l2.5-2.5"/>
<path d="M216.5 124l2.7 2.7l2.7-2.7"/>
<path d="M378 94.2l2.7 2.7l2.7-2.7"/>
<path d="M329 124l2.7 2.7l2.7-2.7"/>
<path d="M370 124l2.7 2.7l2.7-2.7"/>
<path d="M408 124l2.7 2.7l2.7-2.7"/>
<path d="M459.5 94.2l2.7 2.7l2.7-2.7"/>
<path d="M497.5 94.2l2.7 2.7l2.7-2.7"/>
<path d="M534 94.2l2.7 2.7l2.7-2.7"/>
<path d="M557 124l2.7 2.7l2.7-2.7"/>
<path d="M600.5 124l2.7 2.7l2.7-2.7"/>
<path d="M639 124l2.7 2.7l2.7-2.7"/>
</g>
<!-- grow/shrink carets -->
<path d="M317.3 91.3l2.3-2.4l2.3 2.4" stroke="#2b88d8" stroke-width="1.2"/>
<path d="M341.7 88.7l2.2 2.3l2.2-2.3" stroke="#2b88d8" stroke-width="1.2"/>
<!-- eraser -->
<g transform="translate(410.6 97.8) rotate(-40)"><rect x="-4" y="-2.6" width="8" height="5.2" fill="#f3e6f7" stroke="#a346bb" stroke-width="1.2"/><rect x="-4" y="-2.6" width="3" height="5.2" fill="#b45cc9"/></g>
<!-- text effects A -->
<text x="316" y="130.8" text-anchor="middle" font-family="Liberation Sans, sans-serif" font-weight="700" font-size="18" fill="#cfe2f7" stroke="#2b7cd3" stroke-width="1.5" paint-order="stroke">A</text>
<!-- highlighter -->
<g>
<path d="M352 125.8 L358.3 117.8 a1.9 1.9 0 0 1 3 2.3 L355 128 L351.3 128z" stroke="#555" stroke-width="1" fill="#fff"/>
<path d="M350.2 127.6l4.8 0.2 l-2.8 -2.2z" fill="#666"/>
<rect x="347.5" y="128.6" width="15" height="3.6" fill="#ffff00"/>
</g>
<!-- font color bar -->
<rect x="386" y="128.6" width="15" height="3.6" fill="#ff0000"/>
<!-- bullets -->
<g fill="#2b7cd3"><rect x="437.2" y="87.6" width="2.6" height="2.6"/><rect x="437.2" y="93.2" width="2.6" height="2.6"/><rect x="437.2" y="98.8" width="2.6" height="2.6"/></g>
<g stroke="#666" stroke-width="1.2"><path d="M442 88.9h9.3M442 94.5h9.3M442 100.1h9.3"/>
<path d="M480 88.9h9.5M480 94.5h9.5M480 100.1h9.5"/>
<path d="M518 88.9h9.5M521 94.5h6.5M524 100.1h3.5"/></g>
<g font-family="Liberation Sans, sans-serif" font-weight="700" font-size="5.6" fill="#2b7cd3" stroke="none">
<text x="475" y="90.9">1</text><text x="475" y="96.5">2</text><text x="475" y="102.1">3</text>
<text x="513.5" y="90.9">1</text><text x="516" y="96.5">a</text><text x="520.8" y="102.1">i</text>
</g>
<!-- indent icons -->
<g stroke="#666" stroke-width="1.2"><path d="M556.3 88.8h13.2M556.3 100.4h13.2M564 92.6h5.5M564 96.6h5.5"/>
<path d="M580.6 88.8h13.2M580.6 100.4h13.2M588.5 92.6h5.3M588.5 96.6h5.3"/></g>
<g stroke="#2b7cd3" stroke-width="1.2"><path d="M556.5 94.6h5.7M558.8 92.2l-2.4 2.4l2.4 2.4"/>
<path d="M580.6 94.6h5.7M584 92.2l2.4 2.4l-2.4 2.4"/></g>
<!-- sort arrow -->
<path d="M618.5 87.6v14M615.2 98.6l3.3 3.3l3.3-3.3" stroke="#555" stroke-width="1.2"/>
<!-- align icons -->
<g stroke="#666" stroke-width="1.2">
<path d="M438 118.9h13M438 122.6h9.5M438 126.3h13M438 130h9.5"/>
<path d="M462 118.9h13.5M464.5 122.6h8.5M462 126.3h13.5M464.5 130h8.5"/>
<path d="M486.5 118.9h13M490 122.6h9.5M486.5 126.3h13M490 130h9.5"/>
<path d="M510.5 118.9h13.5M510.5 122.6h13.5M510.5 126.3h13.5M510.5 130h13.5"/>
<path d="M543 118.9h9M543 122.6h9M543 126.3h9M543 130h9"/>
</g>
<g stroke="#2b7cd3" stroke-width="1.2"><path d="M538.6 118v5M536.2 120.4l2.4-2.4l2.4 2.4M538.6 126v5M536.2 128.6l2.4 2.4l2.4-2.4"/></g>
<!-- shading -->
<g>
<path d="M581.2 123.5 L586.5 117.8 L591.5 122.6 L586 128 Z" fill="#fff" stroke="#555" stroke-width="1"/>
<path d="M586.3 117.5v3.6" stroke="#555" stroke-width="1"/>
<path d="M590.6 121.3 c1.8 0.3 2.6 2.6 2.2 5.2 c-0.6 -1.8 -1.6 -3.2 -3.2 -3.6z" fill="#2b7cd3"/>
<rect x="579.3" y="129.2" width="14" height="2.8" fill="#fff" stroke="#9a9a9a" stroke-width="0.8"/>
</g>
<!-- borders -->
<g stroke="#666">
<rect x="617.5" y="117.5" width="13" height="13" stroke-width="1" stroke-dasharray="1 1"/>
<path d="M624 117.5v13M617.5 124h13" stroke-width="1" stroke-dasharray="1 1"/>
<path d="M624 120.5v7M620.5 124h7" stroke-width="1.1"/>
<path d="M617 131h14" stroke-width="1.6" stroke="#555"/>
</g>
</svg>

<svg width="1296" height="729" style="left:0;top:0" viewBox="0 0 1296 729">
<defs>
<clipPath id="vclip"><rect x="911.4" y="364.4" width="355.4" height="337.2"/></clipPath>
<linearGradient id="wall" x1="0" y1="0" x2="1" y2="0"><stop offset="0" stop-color="#e6e8ec"/><stop offset="0.35" stop-color="#f1f2f4"/><stop offset="0.7" stop-color="#eceeef"/><stop offset="1" stop-color="#dde3e4"/></linearGradient>
<linearGradient id="wallv" x1="0" y1="0" x2="0" y2="1"><stop offset="0" stop-color="#ffffff" stop-opacity="0.25"/><stop offset="0.6" stop-color="#cfd6d6" stop-opacity="0"/><stop offset="1" stop-color="#9aa3a3" stop-opacity="0.35"/></linearGradient>
<radialGradient id="corner" cx="1" cy="1" r="0.5"><stop offset="0" stop-color="#aab3b2" stop-opacity="0.8"/><stop offset="1" stop-color="#aab3b2" stop-opacity="0"/></radialGradient>
<linearGradient id="head" x1="0" y1="0" x2="0" y2="1"><stop offset="0" stop-color="#343436"/><stop offset="0.25" stop-color="#1f1f21"/><stop offset="1" stop-color="#171718"/></linearGradient>
<linearGradient id="sw" gradientUnits="userSpaceOnUse" x1="911" y1="450" x2="1230" y2="560"><stop offset="0" stop-color="#2b3654"/><stop offset="0.3" stop-color="#344266"/><stop offset="0.7" stop-color="#3a496e"/><stop offset="1" stop-color="#303d60"/></linearGradient>
<radialGradient id="face" cx="0.45" cy="0.35" r="0.75"><stop offset="0" stop-color="#ddb9a8"/><stop offset="0.5" stop-color="#cca08e"/><stop offset="1" stop-color="#a67a6a"/></radialGradient>
<linearGradient id="shirt" x1="0" y1="0" x2="0" y2="1"><stop offset="0" stop-color="#d5dcea"/><stop offset="0.4" stop-color="#f3f5fa"/><stop offset="1" stop-color="#e4e8f1"/></linearGradient>
<filter id="b1" x="-10%" y="-10%" width="120%" height="120%"><feGaussianBlur stdDeviation="0.7"/></filter>
<filter id="b2" x="-20%" y="-20%" width="140%" height="140%"><feGaussianBlur stdDeviation="2.2"/></filter>
<filter id="b3" x="-30%" y="-30%" width="160%" height="160%"><feGaussianBlur stdDeviation="5"/></filter>
</defs>
<g clip-path="url(#vclip)">
<rect x="911.4" y="364.4" width="355.4" height="337.2" fill="url(#wall)"/>
<rect x="911.4" y="364.4" width="355.4" height="337.2" fill="url(#wallv)"/>
<rect x="1150" y="560" width="120" height="145" fill="url(#corner)"/>
<g filter="url(#b1)">
<path d="M976.0 473.6 L1147.3 473.6 L1147.3 558.7 L1046.9 691.2 L953.3 691.2 L953.7 685.1 L958.9 618.8 L964.1 572.9 L975.0 501.9Z" fill="#1b1b1c"/>
<rect x="980.5" y="399" width="170.5" height="77" rx="11" fill="url(#head)"/>
<path d="M976.9 478.3 L1145.4 478.3 L1144.4 501.9 L976.0 501.9Z" fill="#2e2e2f"/>
<path d="M909.7 669.9 C913.7 666.8 927.5 667.0 933.4 667.5 C939.3 668.1 943.3 670.1 945.2 673.2 C947.1 676.4 950.7 684.3 944.7 686.5 C938.8 688.7 915.6 689.2 909.7 686.5 C903.9 683.7 905.8 673.1 909.7 669.9Z" fill="#161617"/>
</g>
<g filter="url(#b1)"><path d="M1029.0 482.1 C1025.7 480.6 1019.0 488.9 1013.4 493.0 C1007.7 497.0 1000.5 502.0 994.9 506.2 C989.3 510.4 983.1 510.9 979.8 518.0 C976.4 525.2 976.4 536.2 975.0 549.3 C973.7 562.3 972.4 586.8 971.7 596.6 C971.0 606.4 971.8 597.7 971.0 607.9 C970.2 618.2 967.8 645.0 967.0 658.1 C966.2 671.2 966.3 677.8 966.0 686.5 C965.8 695.1 952.1 704.6 965.6 710.1 C979.0 715.7 1006.6 719.6 1046.9 719.6 C1087.3 719.6 1180.5 715.7 1207.8 710.1 C1235.1 704.6 1209.1 694.4 1210.7 686.5 C1212.2 678.6 1215.5 669.9 1217.3 662.8 C1219.0 655.7 1221.5 653.4 1221.1 643.9 C1220.7 634.4 1219.3 620.2 1214.9 606.0 C1210.5 591.8 1201.6 573.1 1194.6 558.7 C1187.5 544.4 1180.1 529.2 1172.8 519.9 C1165.5 510.6 1158.6 507.9 1151.0 502.9 C1143.5 497.9 1133.7 493.4 1127.4 490.1 C1121.1 486.8 1118.7 481.0 1113.2 483.0 C1107.7 485.0 1102.9 496.4 1094.3 501.9 C1085.6 507.5 1071.4 516.1 1061.1 516.1 C1050.9 516.1 1038.1 507.6 1032.8 501.9 C1027.4 496.3 1032.2 483.6 1029.0 482.1Z" fill="url(#sw)"/><path d="M1006.7 498.2 C1000.3 498.3 989.3 510.1 979.8 517.1 C970.2 524.0 958.0 532.5 949.5 539.8 C941.0 547.1 935.4 554.1 928.7 561.1 C921.9 568.0 914.3 572.4 908.8 581.4 C903.3 590.5 895.5 603.0 895.5 615.5 C895.5 628.0 902.5 652.6 908.8 656.2 C915.1 659.7 924.6 644.8 933.4 636.8 C942.2 628.7 954.5 615.3 961.6 607.9 C968.7 600.6 967.3 601.0 976.0 592.8 C984.7 584.6 1006.7 571.5 1013.8 558.7 C1020.9 545.9 1019.7 526.2 1018.6 516.1 C1017.4 506.0 1013.2 498.0 1006.7 498.2Z" fill="url(#sw)"/></g>
<g filter="url(#b3)" opacity="0.55">
<path d="M965.6 615.5 C968.9 593.4 979.0 575.3 985.4 558.7 C991.9 542.2 998.1 523.2 1004.4 516.1 C1010.7 509.0 1021.7 506.7 1023.3 516.1 C1024.9 525.6 1017.8 551.6 1013.8 572.9 C1009.9 594.2 1005.1 624.2 999.6 643.9 C994.1 663.6 986.4 683.3 980.7 691.2 C975.0 699.1 968.1 703.8 965.6 691.2 C963.0 678.6 962.3 637.6 965.6 615.5Z" fill="#1f2945"/>
<path d="M1151.0 530.3 C1154.2 526.4 1170.8 546.1 1179.4 558.7 C1188.1 571.3 1198.4 590.3 1203.1 606.0 C1207.8 621.8 1210.2 639.9 1207.8 653.4 C1205.4 666.8 1195.2 688.0 1188.9 686.5 C1182.6 684.9 1174.7 661.2 1170.0 643.9 C1165.2 626.5 1163.7 601.3 1160.5 582.4 C1157.3 563.5 1147.9 534.3 1151.0 530.3Z" fill="#232e4d"/>
<path d="M1046.9 606.0 C1056.4 592.6 1086.4 582.4 1103.7 582.4 C1121.1 582.4 1143.2 592.6 1151.0 606.0 C1158.9 619.4 1162.1 650.2 1151.0 662.8 C1140.0 675.4 1102.1 681.7 1084.8 681.7 C1067.4 681.7 1053.3 675.4 1046.9 662.8 C1040.6 650.2 1037.5 619.4 1046.9 606.0Z" fill="#44557f"/>
</g>
<g filter="url(#b1)"><path d="M1031.8 501.9 L1046.9 497.2 L1113.2 494.8 L1115.1 510.5 L1103.7 535.1 L1081.0 563.5 L1068.2 582.4 L1064.0 592.8 L1058.8 568.2 L1046.9 539.8Z" fill="url(#shirt)"/></g>
<path d="M1029.0 483.0 C1030.1 487.1 1032.6 497.8 1035.6 507.6 C1038.6 517.5 1043.0 531.7 1046.9 542.2 C1050.9 552.7 1056.4 562.1 1059.2 570.6 C1062.1 579.0 1063.2 589.1 1064.0 592.8" fill="none" stroke="#232d4a" stroke-width="3" filter="url(#b1)"/>
<path d="M1113.2 484.0 C1113.7 488.5 1117.6 502.5 1116.0 511.4 C1114.4 520.3 1109.6 528.4 1103.7 537.4 C1097.9 546.5 1087.6 556.6 1081.0 565.8 C1074.4 575.0 1066.8 588.3 1064.0 592.8" fill="none" stroke="#232d4a" stroke-width="3.5" filter="url(#b1)"/>
<path d="M1064.0 592.8 C1063.1 598.2 1060.8 614.1 1058.8 625.0 C1056.7 635.8 1053.6 647.0 1051.7 658.1 C1049.7 669.1 1047.7 685.7 1046.9 691.2" fill="none" stroke="#6f7894" stroke-width="1.3"/>
<path d="M1067.8 592.8 C1066.9 598.2 1064.6 614.1 1062.6 625.0 C1060.5 635.8 1057.4 647.0 1055.5 658.1 C1053.5 669.1 1051.5 685.7 1050.7 691.2" fill="none" stroke="#1f2844" stroke-width="1.6" opacity="0.7"/>
<path d="M1037.2 502.8 C1039.9 503.6 1049.8 516.4 1055.8 520.4 C1061.8 524.4 1067.1 527.0 1073.4 527.0 C1079.6 527.0 1087.8 525.1 1093.1 520.4 C1098.4 515.6 1103.3 499.9 1105.2 498.4 C1107.0 497.0 1106.1 506.5 1104.1 511.6 C1102.0 516.7 1098.2 525.1 1093.1 529.2 C1088.0 533.2 1079.9 535.4 1073.4 535.7 C1066.8 536.1 1059.3 534.6 1053.6 531.3 C1047.9 528.1 1042.1 520.7 1039.4 516.0 C1036.6 511.2 1034.4 502.1 1037.2 502.8Z" fill="#a67a69" filter="url(#b1)"/>
<g filter="url(#b1)">
<ellipse cx="1026.9" cy="460.1" rx="5" ry="13.5" fill="#bd8d7b"/>
<ellipse cx="1110.2" cy="457.9" rx="5.5" ry="14" fill="#b48573"/>
<path d="M1026.2 445.8 C1025.5 442.1 1026.0 430.4 1027.3 423.9 C1028.6 417.3 1030.2 411.1 1033.9 406.3 C1037.5 401.6 1043.4 397.9 1049.2 395.4 C1055.1 392.8 1062.4 391.0 1069.0 391.0 C1075.5 391.0 1083.2 392.4 1088.7 395.4 C1094.2 398.3 1098.6 403.0 1101.9 408.5 C1105.2 414.0 1107.2 422.0 1108.4 428.3 C1109.7 434.5 1110.3 442.9 1109.5 445.8 C1108.8 448.7 1105.7 449.5 1104.1 445.8 C1102.4 442.1 1103.0 430.4 1099.7 423.9 C1096.4 417.3 1090.2 410.0 1084.3 406.3 C1078.5 402.7 1071.2 401.6 1064.6 401.9 C1058.0 402.3 1050.0 404.9 1044.8 408.5 C1039.7 412.2 1036.1 417.7 1033.9 423.9 C1031.7 430.1 1033.0 442.1 1031.7 445.8 C1030.4 449.5 1026.9 449.5 1026.2 445.8Z" fill="#5b4e46"/>
<path d="M1031.7 445.8 C1032.0 438.5 1030.9 430.1 1032.8 423.9 C1034.6 417.7 1037.3 412.2 1042.6 408.5 C1047.9 404.9 1057.3 402.3 1064.6 401.9 C1071.9 401.6 1080.7 403.0 1086.5 406.3 C1092.4 409.6 1096.6 415.1 1099.7 421.7 C1102.8 428.3 1104.1 438.1 1105.2 445.8 C1106.2 453.5 1106.2 460.4 1105.8 467.7 C1105.4 475.1 1104.7 482.7 1103.0 489.7 C1101.2 496.6 1098.8 503.9 1095.3 509.4 C1091.8 514.9 1086.5 519.8 1082.1 522.6 C1077.7 525.3 1073.4 525.9 1069.0 525.9 C1064.6 525.9 1060.2 525.3 1055.8 522.6 C1051.4 519.8 1046.1 514.9 1042.6 509.4 C1039.2 503.9 1037.0 496.6 1035.0 489.7 C1033.0 482.7 1031.1 475.1 1030.6 467.7 C1030.0 460.4 1031.3 453.1 1031.7 445.8Z" fill="url(#face)"/>
</g>
<path d="M1033.9 419.5 C1033.5 418.4 1037.9 408.0 1042.6 404.1 C1047.4 400.3 1055.4 397.4 1062.4 396.5 C1069.3 395.5 1078.1 395.9 1084.3 398.6 C1090.5 401.4 1096.4 407.6 1099.7 412.9 C1103.0 418.2 1104.4 429.7 1104.1 430.4 C1103.7 431.2 1101.1 421.1 1097.5 417.3 C1093.8 413.5 1088.0 409.4 1082.1 407.4 C1076.3 405.4 1068.6 404.7 1062.4 405.2 C1056.2 405.8 1049.6 408.3 1044.8 410.7 C1040.1 413.1 1034.2 420.6 1033.9 419.5Z" fill="#6a5a50" opacity="0.75" filter="url(#b2)"/>
<g filter="url(#b1)">
<path d="M1037.2 449.1 C1038.8 448.5 1043.4 445.6 1047.0 445.4 C1050.7 445.1 1057.1 447.2 1059.1 447.6" stroke="#4a3b34" stroke-width="2.6" fill="none" opacity="0.9"/>
<path d="M1074.4 445.8 C1076.5 445.3 1082.7 442.5 1086.5 442.5 C1090.4 442.5 1095.7 445.3 1097.5 445.8" stroke="#4a3b34" stroke-width="2.6" fill="none" opacity="0.9"/>
<ellipse cx="1049.7" cy="454.6" rx="4" ry="1.8" fill="#3c2e2a"/>
<ellipse cx="1083.9" cy="452.8" rx="4" ry="1.8" fill="#3c2e2a"/>
<ellipse cx="1049.7" cy="455.7" rx="8.5" ry="5" fill="#8b5f50" opacity="0.28" filter="url(#b2)"/>
<ellipse cx="1083.9" cy="454.1" rx="8.5" ry="5" fill="#8b5f50" opacity="0.28" filter="url(#b2)"/>
<path d="M1058.0 476.5 C1059.2 476.2 1063.7 480.9 1066.8 480.9 C1069.9 480.9 1075.4 476.1 1076.6 476.5 C1077.9 476.9 1076.1 481.7 1074.4 483.1 C1072.8 484.5 1069.2 484.9 1066.8 484.8 C1064.3 484.8 1061.2 484.0 1059.8 482.7 C1058.3 481.3 1056.8 476.8 1058.0 476.5Z" fill="#8d5f50" opacity="0.55" filter="url(#b1)"/>
<path d="M1062.4 454.6 C1061.5 454.6 1061.1 464.1 1060.2 467.7 C1059.3 471.4 1056.7 474.7 1056.9 476.5 C1057.1 478.3 1059.8 480.2 1061.3 478.7 C1062.7 477.2 1065.5 471.8 1065.7 467.7 C1065.9 463.7 1063.3 454.6 1062.4 454.6Z" fill="#9a6b5b" opacity="0.35" filter="url(#b2)"/>
<path d="M1049.2 489.7 C1052.9 486.7 1060.9 485.5 1066.8 485.3 C1072.6 485.1 1080.5 485.7 1084.3 488.6 C1088.2 491.5 1090.2 497.9 1089.8 502.8 C1089.4 507.8 1086.0 514.9 1082.1 518.2 C1078.3 521.5 1071.7 522.6 1066.8 522.6 C1061.8 522.6 1056.2 521.5 1052.5 518.2 C1048.9 514.9 1045.4 507.6 1044.8 502.8 C1044.3 498.1 1045.6 492.6 1049.2 489.7Z" fill="#8f7a72" opacity="0.4" filter="url(#b2)"/>
<path d="M1055.8 493.0 C1057.1 491.9 1063.1 490.8 1066.8 490.8 C1070.4 490.8 1076.5 491.9 1077.7 493.0 C1079.0 494.1 1076.3 496.4 1074.4 497.4 C1072.6 498.3 1069.3 498.9 1066.8 498.9 C1064.2 498.9 1060.9 498.3 1059.1 497.4 C1057.3 496.4 1054.5 494.1 1055.8 493.0Z" fill="#6a4540"/>
</g>
<path d="M1037.2 485.3 C1038.8 485.3 1042.1 498.4 1047.0 502.8 C1052.0 507.2 1059.8 511.6 1066.8 511.6 C1073.7 511.6 1082.9 507.6 1088.7 502.8 C1094.6 498.1 1100.0 483.1 1101.9 483.1 C1103.7 483.1 1102.2 496.6 1099.7 502.8 C1097.1 509.0 1092.0 516.7 1086.5 520.4 C1081.0 524.0 1073.0 524.8 1066.8 524.8 C1060.6 524.8 1054.2 524.0 1049.2 520.4 C1044.3 516.7 1039.2 508.7 1037.2 502.8 C1035.1 497.0 1035.5 485.3 1037.2 485.3Z" fill="#7f5a4d" opacity="0.35" filter="url(#b2)"/>
<path d="M905 684.8 L1275 690.2 L1275 710 L905 710Z" fill="#151515"/>
<path d="M905 684.3 L1275 689.7 L1275 691 L905 685.6Z" fill="#3a3a3a"/>
<path d="M1067.7 703.0 C1054.5 700.0 1073.6 691.2 1079.5 685.2 C1085.4 679.2 1096.0 670.4 1103.2 667.0 C1110.5 663.7 1116.4 664.3 1123.0 665.0 C1129.5 665.8 1137.1 668.7 1142.7 671.4 C1148.3 674.1 1153.6 677.3 1156.5 681.2 C1159.5 685.2 1160.2 691.4 1160.5 695.1 C1160.8 698.7 1174.0 701.6 1158.5 703.0 C1143.0 704.3 1080.8 705.9 1067.7 703.0Z" fill="#cda593" filter="url(#b1)"/>
<path d="M1082.5 703.0 C1082.1 700.5 1087.6 692.1 1091.4 688.1 C1095.1 684.2 1103.9 678.8 1105.2 679.3 C1106.5 679.8 1101.2 687.2 1099.3 691.1 C1097.3 695.1 1096.1 701.0 1093.3 703.0 C1090.5 704.9 1082.8 705.4 1082.5 703.0Z" fill="#9a6f5e" opacity="0.6" filter="url(#b1)"/>
<path d="M1123.0 665.0 C1121.3 663.2 1128.2 660.6 1132.8 660.5 C1137.4 660.4 1145.8 661.6 1150.6 664.4 C1155.4 667.2 1158.8 672.2 1161.5 677.3 C1164.1 682.4 1166.1 690.8 1166.4 695.1 C1166.7 699.3 1164.8 701.6 1163.5 703.0 C1162.1 704.3 1159.0 704.3 1158.5 703.0 C1158.0 701.6 1160.8 698.7 1160.5 695.1 C1160.2 691.4 1159.5 685.2 1156.5 681.2 C1153.6 677.3 1148.3 674.1 1142.7 671.4 C1137.1 668.7 1124.6 666.8 1123.0 665.0Z" fill="#eef1f7" filter="url(#b1)"/>
<g filter="url(#b1)">
<path d="M1262.4 364.4 C1261.7 369.1 1258.0 383.4 1258.0 392.9 C1258.0 402.4 1263.2 412.3 1262.4 421.5 C1261.7 430.6 1255.8 440.8 1253.7 447.8 C1251.5 454.7 1251.1 457.3 1249.3 463.2 C1247.4 469.0 1243.8 479.6 1242.7 482.9" fill="none" stroke="#6b5a4a" stroke-width="0.8"/>
<path d="M1258.0 392.9 C1255.8 391.5 1250.4 384.5 1244.9 384.1 C1239.4 383.8 1228.4 389.6 1225.1 390.7" fill="none" stroke="#6b5a4a" stroke-width="0.8"/>
<path d="M1251.5 461.0 C1252.9 463.2 1258.0 469.0 1260.2 474.1 C1262.4 479.3 1263.9 488.8 1264.6 491.7" fill="none" stroke="#6b5a4a" stroke-width="0.8"/>
<path d="M-17.2 0 Q0 -10.8 17.2 0 Q0 10.8 -17.2 0Z" fill="#4f7340" transform="translate(1237.2 383.0) rotate(-25)"/>
<path d="M-9.6 0 Q0 -5.4 9.6 0 Q0 5.4 -9.6 0Z" fill="#58794a" transform="translate(1215.9 396.9) rotate(-25)"/>
<path d="M0 -12.1 Q10.0 0 0 12.1 Q-10.0 0 0 -12.1Z" fill="#5a7c48" transform="translate(1230.6 401.3) rotate(12)"/>
<path d="M-12.1 0 Q0 -13.3 12.1 0 Q0 13.3 -12.1 0Z" fill="#44663a" transform="translate(1244.9 409.4) rotate(-35)"/>
<path d="M-13.9 0 Q0 -17.5 13.9 0 Q0 17.5 -13.9 0Z" fill="#3f5f33" transform="translate(1255.8 373.2) rotate(20)"/>
<path d="M0 -15.1 Q13.3 0 0 15.1 Q-13.3 0 0 -15.1Z" fill="#42633a" transform="translate(1263.5 386.3) rotate(0)"/>
<path d="M-9.1 0 Q0 -10.8 9.1 0 Q0 10.8 -9.1 0Z" fill="#4d7040" transform="translate(1249.3 395.1) rotate(20)"/>
<path d="M0 -12.6 Q10.0 0 0 12.6 Q-10.0 0 0 -12.6Z" fill="#4a6c3c" transform="translate(1263.5 414.9) rotate(10)"/>
<path d="M-7.6 0 Q0 -10.0 7.6 0 Q0 10.0 -7.6 0Z" fill="#4b6e3d" transform="translate(1253.7 414.9) rotate(-20)"/>
<path d="M-10.1 0 Q0 -7.5 10.1 0 Q0 7.5 -10.1 0Z" fill="#4a6b3b" transform="translate(1244.9 368.8) rotate(10)"/>
<path d="M-7.6 0 Q0 -12.5 7.6 0 Q0 12.5 -7.6 0Z" fill="#3b5a30" transform="translate(1264.6 366.6) rotate(0)"/>
<path d="M0 -11.6 Q10.0 0 0 11.6 Q-10.0 0 0 -11.6Z" fill="#557848" transform="translate(1261.3 454.4) rotate(15)"/>
<path d="M0 -11.1 Q9.2 0 0 11.1 Q-9.2 0 0 -11.1Z" fill="#4a6d3c" transform="translate(1264.2 474.1) rotate(-5)"/>
<path d="M0 -7.6 Q5.0 0 0 7.6 Q-5.0 0 0 -7.6Z" fill="#587a49" transform="translate(1265.7 434.6) rotate(10)"/>
<path d="M0 -12.1 Q15.8 0 0 12.1 Q-15.8 0 0 -12.1Z" fill="#4c6f3e" transform="translate(1242.2 482.9) rotate(20)"/>
<path d="M-12.6 0 Q0 -5.0 12.6 0 Q0 5.0 -12.6 0Z" fill="#5c7f4c" transform="translate(1226.9 492.8) rotate(-42)"/>
<path d="M0 -13.6 Q8.3 0 0 13.6 Q-8.3 0 0 -13.6Z" fill="#527545" transform="translate(1249.3 494.3) rotate(8)"/>
<path d="M0 -11.1 Q10.0 0 0 11.1 Q-10.0 0 0 -11.1Z" fill="#456839" transform="translate(1258.5 488.4) rotate(-10)"/>
<path d="M0 -7.6 Q8.3 0 0 7.6 Q-8.3 0 0 -7.6Z" fill="#4e7141" transform="translate(1253.7 474.1) rotate(30)"/>
<path d="M0 -7.6 Q9.2 0 0 7.6 Q-9.2 0 0 -7.6Z" fill="#48693b" transform="translate(1239.4 403.9) rotate(-30)"/>
<path d="M0 -13.9 Q11.7 0 0 13.9 Q-11.7 0 0 -13.9Z" fill="#385730" transform="translate(1265.7 376.5) rotate(5)"/>
<path d="M0 -10.1 Q12.5 0 0 10.1 Q-12.5 0 0 -10.1Z" fill="#3f5f35" transform="translate(1260.2 401.7) rotate(-15)"/>
<path d="M0 -6.6 Q4.2 0 0 6.6 Q-4.2 0 0 -6.6Z" fill="#5a7c4a" transform="translate(1255.8 432.4) rotate(25)"/>
</g>
</g></svg>
<svg width="20" height="24" style="left:653.5px;top:149.5px" viewBox="0 0 20 24"><path d="M2 1.5 L2 16.2 L5.6 12.9 L8.7 19.6 L11.2 18.4 L8.2 11.9 L13 11.7 Z" fill="#fff" stroke="#444" stroke-width="0.95" stroke-linejoin="round"/></svg>


</body></html>
